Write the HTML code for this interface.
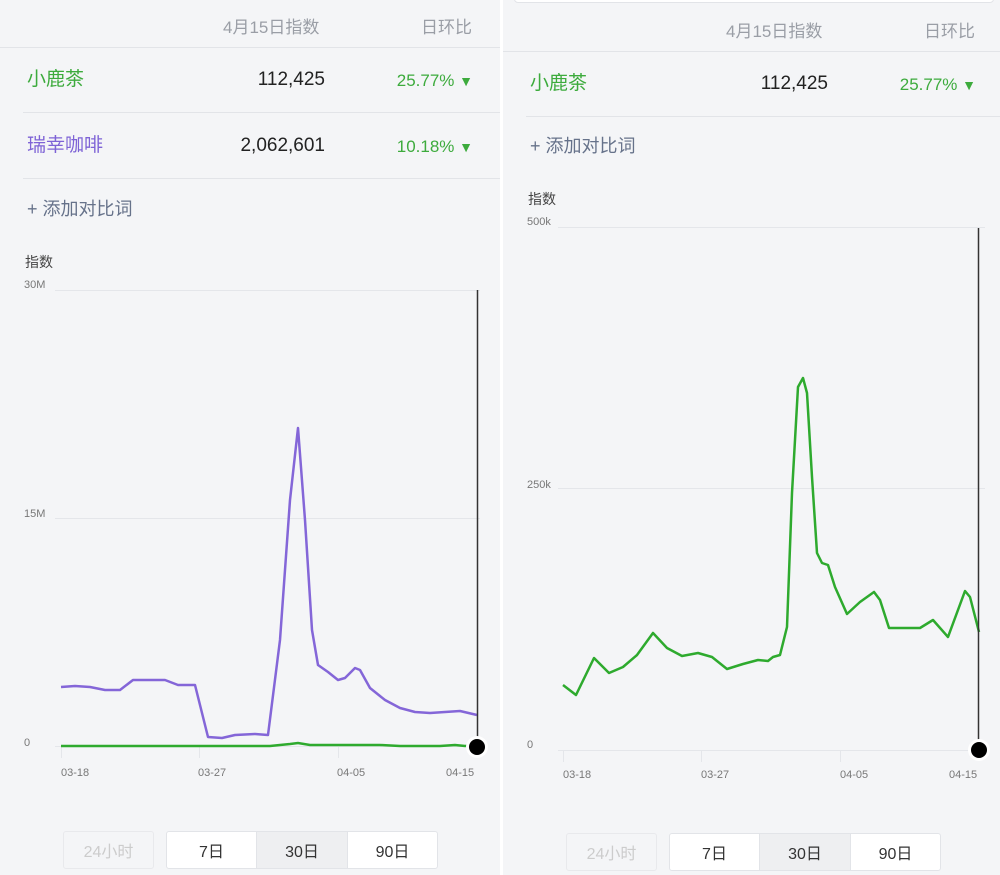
<!DOCTYPE html>
<html><head><meta charset="utf-8"><style>
*{margin:0;padding:0;box-sizing:border-box}
body{width:1000px;height:875px;background:#f4f5f7;position:relative;overflow:hidden;font-family:"Liberation Sans","Noto Sans CJK SC",sans-serif}
.t{position:absolute;white-space:nowrap;line-height:1}
.r{text-align:right}
.hd{color:#9a9ea6;font-size:17px}
.nm{font-size:19px}
.num{color:#222;font-size:19px}
.pct{color:#3dab3d;font-size:17px}
.add{color:#66728a;font-size:18px}
.ax{color:#777;font-size:11px}
.yl{color:#444;font-size:14px}
.hr{position:absolute;height:1px;background:#e2e4e8}
.btn{position:absolute;height:38px;border:1px solid #e2e4e8;border-radius:3px;font-size:16px;display:flex;align-items:center;justify-content:center;color:#333;background:#fff}
</style></head><body>
<div style="position:absolute;left:500px;top:0;width:3px;height:875px;background:#fff"></div>
<div style="position:absolute;left:514px;top:-10px;width:480px;height:13px;background:#fff;border:1px solid #e2e4e8;border-radius:4px"></div>

<!-- left panel -->
<div class="t hd" style="left:223px;top:19px">4月15日指数</div>
<div class="t hd" style="left:421px;top:19px">日环比</div>
<div class="hr" style="left:0;width:500px;top:47px"></div>
<div class="t nm" style="left:27px;top:70px;color:#3dab3d">小鹿茶</div>
<div class="t num r" style="right:675px;top:70px">112,425</div>
<div class="t pct r" style="right:527px;top:72px">25.77% <span style="font-size:14px">▼</span></div>
<div class="hr" style="left:23px;width:477px;top:112px"></div>
<div class="t nm" style="left:27px;top:136px;color:#7e63d6">瑞幸咖啡</div>
<div class="t num r" style="right:675px;top:136px">2,062,601</div>
<div class="t pct r" style="right:527px;top:138px">10.18% <span style="font-size:14px">▼</span></div>
<div class="hr" style="left:23px;width:477px;top:178px"></div>
<div class="t add" style="left:27px;top:200px">+ 添加对比词</div>
<div class="t yl" style="left:25px;top:255px">指数</div>
<div class="t ax" style="left:24px;top:280px">30M</div>
<div class="t ax" style="left:24px;top:509px">15M</div>
<div class="t ax" style="left:24px;top:738px">0</div>
<div class="t ax" style="left:61px;top:768px">03-18</div>
<div class="t ax" style="left:198px;top:768px">03-27</div>
<div class="t ax" style="left:337px;top:768px">04-05</div>
<div class="t ax" style="left:446px;top:768px">04-15</div>
<div class="btn" style="left:63px;top:831px;width:91px;color:#ccc;background:#f4f5f7;border-color:#e8e9ec">24小时</div>
<div class="btn" style="left:166px;top:831px;width:91px;border-radius:3px 0 0 3px">7日</div>
<div class="btn" style="left:256px;top:831px;width:92px;border-radius:0;background:#eeeff1">30日</div>
<div class="btn" style="left:347px;top:831px;width:91px;border-radius:0 3px 3px 0">90日</div>

<!-- right panel -->
<div class="t hd" style="left:726px;top:23px">4月15日指数</div>
<div class="t hd" style="left:924px;top:23px">日环比</div>
<div class="hr" style="left:503px;width:497px;top:51px"></div>
<div class="t nm" style="left:530px;top:74px;color:#3dab3d">小鹿茶</div>
<div class="t num r" style="right:172px;top:74px">112,425</div>
<div class="t pct r" style="right:24px;top:76px">25.77% <span style="font-size:14px">▼</span></div>
<div class="hr" style="left:526px;width:474px;top:116px"></div>
<div class="t add" style="left:530px;top:137px">+ 添加对比词</div>
<div class="t yl" style="left:528px;top:192px">指数</div>
<div class="t ax" style="left:527px;top:217px">500k</div>
<div class="t ax" style="left:527px;top:480px">250k</div>
<div class="t ax" style="left:527px;top:740px">0</div>
<div class="t ax" style="left:563px;top:770px">03-18</div>
<div class="t ax" style="left:701px;top:770px">03-27</div>
<div class="t ax" style="left:840px;top:770px">04-05</div>
<div class="t ax" style="left:949px;top:770px">04-15</div>
<div class="btn" style="left:566px;top:833px;width:91px;color:#ccc;background:#f4f5f7;border-color:#e8e9ec">24小时</div>
<div class="btn" style="left:669px;top:833px;width:91px;border-radius:3px 0 0 3px">7日</div>
<div class="btn" style="left:759px;top:833px;width:92px;border-radius:0;background:#eeeff1">30日</div>
<div class="btn" style="left:850px;top:833px;width:91px;border-radius:0 3px 3px 0">90日</div>

<svg width="1000" height="875" style="position:absolute;left:0;top:0" fill="none">
<g stroke="#e4e6ea" stroke-width="1">
<line x1="55" y1="290.5" x2="480" y2="290.5"/><line x1="55" y1="518.5" x2="480" y2="518.5"/><line x1="55" y1="746.5" x2="480" y2="746.5"/>
<line x1="61.5" y1="747" x2="61.5" y2="758"/><line x1="199.5" y1="747" x2="199.5" y2="758"/><line x1="338.5" y1="747" x2="338.5" y2="758"/>
<line x1="558" y1="227.5" x2="985" y2="227.5"/><line x1="558" y1="488.5" x2="985" y2="488.5"/><line x1="558" y1="750.5" x2="985" y2="750.5"/>
<line x1="563.5" y1="751" x2="563.5" y2="762"/><line x1="701.5" y1="751" x2="701.5" y2="762"/><line x1="840.5" y1="751" x2="840.5" y2="762"/>
</g>
<polyline stroke="#8466d8" stroke-width="2.5" stroke-linejoin="round" points="61,687 75,686 90,687 105,690 120,690 133,680 165,680 178,685 195,685 208,737 222,738 235,735 255,734 268,735 280,640 290,500 298,428 305,520 312,630 318,665 328,672 338,680 345,678 355,668 360,670 370,688 385,700 400,708 415,712 430,713 445,712 460,711 477,715"/>
<polyline stroke="#2eaa2e" stroke-width="2.5" points="61,746 270,746 290,744 298,743 310,745 350,745 380,745 400,746 440,746 455,745 465,746 477,745"/>
<polyline stroke="#2eaa2e" stroke-width="2.5" stroke-linejoin="round" points="563,685 576,695 594,658 609,673 623,667 637,655 653,633 667,648 682,656 698,653 712,657 727,669 743,664 758,660 768,661 773,657 780,655 787,627 792,493 798,387 803,378 807,393 812,477 817,553 822,563 828,565 835,587 847,614 860,602 874,592 880,600 889,628 920,628 933,620 948,637 965,591 970,597 979,632"/>
<line x1="477.5" y1="290" x2="477.5" y2="746" stroke="#333" stroke-width="1.5"/>
<line x1="978.5" y1="228" x2="978.5" y2="750" stroke="#333" stroke-width="1.5"/>
<circle cx="477" cy="747" r="11" fill="#fff"/><circle cx="477" cy="747" r="8" fill="#000"/>
<circle cx="979" cy="750" r="11" fill="#fff"/><circle cx="979" cy="750" r="8" fill="#000"/>
</svg>
</body></html>
